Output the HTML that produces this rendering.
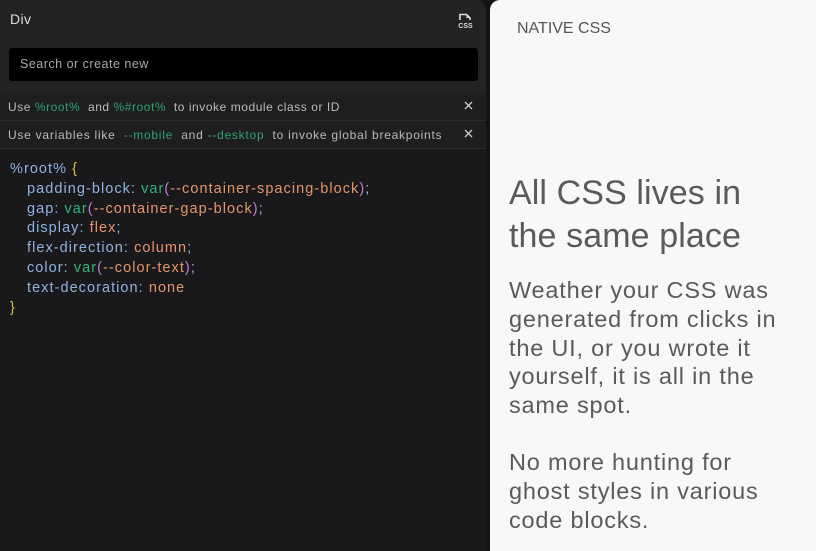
<!DOCTYPE html>
<html><head><meta charset="utf-8"><style>
*{margin:0;padding:0;box-sizing:border-box}
body{width:816px;height:551px;background:#141416;font-family:"Liberation Sans",sans-serif;position:relative;overflow:hidden}
.left{position:absolute;left:0;top:0;width:486px;height:551px;background:#19191b;border-radius:0 10px 0 0;overflow:hidden}
.hdr{height:93px;background:#232325;position:relative}
.hdr .t{position:absolute;left:10px;top:11px;color:#ddd;font-size:14px;letter-spacing:.4px}
.search{position:absolute;left:9px;top:48px;width:469px;height:33px;background:#000;border-radius:3px;color:#aaa;font-size:12.5px;padding:9px 11px;letter-spacing:.5px}
.row{height:28px;background:#1e1e20;border-bottom:1px solid #2c2c2e;color:#bbb;font-size:12px;padding:7px 8px;position:relative;letter-spacing:.55px}
.row2{letter-spacing:.75px}
.row .g{color:#2fa36f}
.row .x{position:absolute;right:13px;top:8px}
.code{padding:11px 10px;font-size:14.5px;line-height:19.8px;color:#8fb3e0;letter-spacing:1.05px}
.code div{white-space:pre}
.ind{padding-left:17px}
.o{color:#e4956c}.v{color:#30b27a}.p{color:#c677dd}.y{color:#d8c037}
.right{position:absolute;left:490px;top:0;width:326px;height:551px;background:#f9f8f6;border-radius:10px 0 0 0;color:#5a5a5a}
.nat{position:absolute;left:27px;top:20px;font-size:16px;color:#555}
.h{position:absolute;left:19px;top:172px;font-size:34px;line-height:43px;color:#5a5a5a;letter-spacing:.1px}
.b{position:absolute;left:19px;font-size:23.5px;line-height:28.8px;color:#5a5a5a;letter-spacing:.8px;white-space:nowrap}
</style></head><body>
<div class="left">
 <div class="hdr"><div class="t">Div</div>
  <svg style="position:absolute;left:458px;top:12px" width="17" height="17" viewBox="0 0 17 17"><path d="M2 8V2.5h6.5l3.5 3.5v2" fill="none" stroke="#ddd" stroke-width="1.6"/><path d="M8.5 2.5v3.5h3.5z" fill="#ddd"/><text x="0.3" y="16" font-size="7" font-weight="bold" fill="#ddd" font-family="Liberation Sans">CSS</text></svg>
  <div class="search">Search or create new</div></div>
 <div class="row">Use <span class="g">%root%</span>&nbsp; and <span class="g">%#root%</span>&nbsp; to invoke module class or ID<svg class="x" width="9" height="9" viewBox="0 0 9 9"><path d="M1 1l7 7M8 1L1 8" stroke="#ccc" stroke-width="1.3"/></svg></div>
 <div class="row row2">Use variables like &nbsp;<span class="g">--mobile</span>&nbsp; and <span class="g">--desktop</span>&nbsp; to invoke global breakpoints<svg class="x" width="9" height="9" viewBox="0 0 9 9"><path d="M1 1l7 7M8 1L1 8" stroke="#ccc" stroke-width="1.3"/></svg></div>
 <div class="code">
<div>%root% <span class="y">{</span></div>
<div class="ind">padding-block: <span class="v">var</span><span class="p">(</span><span class="o">--container-spacing-block</span><span class="p">)</span>;</div>
<div class="ind">gap: <span class="v">var</span><span class="p">(</span><span class="o">--container-gap-block</span><span class="p">)</span>;</div>
<div class="ind">display: <span class="o">flex</span>;</div>
<div class="ind">flex-direction: <span class="o">column</span>;</div>
<div class="ind">color: <span class="v">var</span><span class="p">(</span><span class="o">--color-text</span><span class="p">)</span>;</div>
<div class="ind">text-decoration: <span class="o">none</span></div>
<div><span class="y">}</span></div>
 </div>
</div>
<div class="right">
 <div class="nat">NATIVE CSS</div>
 <div class="h">All CSS lives in<br>the same place</div>
 <div class="b" style="top:276px">Weather your CSS was<br>generated from clicks in<br>the UI, or you wrote it<br>yourself, it is all in the<br>same spot.</div>
 <div class="b" style="top:448px">No more hunting for<br>ghost styles in various<br>code blocks.</div>
</div>
</body></html>
